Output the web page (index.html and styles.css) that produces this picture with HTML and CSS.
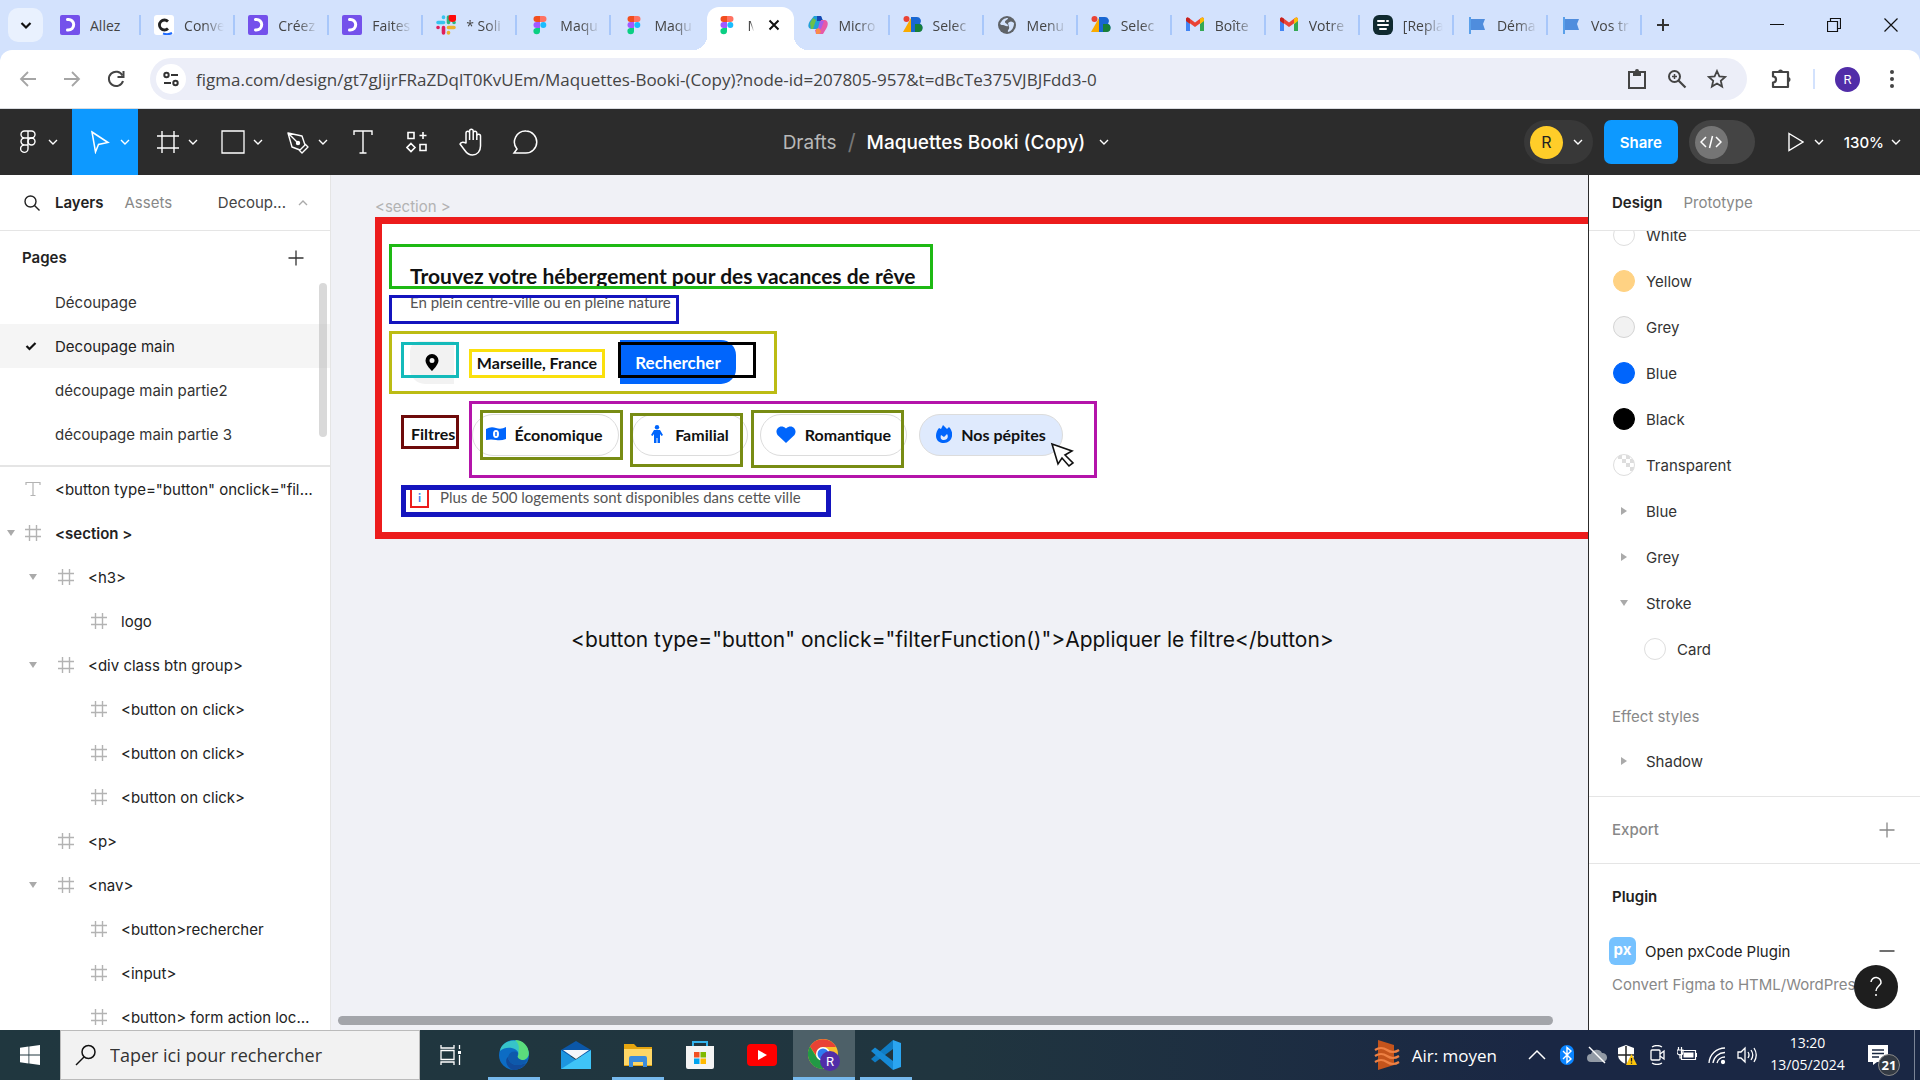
FILE: index.html
```html
<!DOCTYPE html>
<html lang="fr">
<head>
<meta charset="utf-8">
<meta name="viewport" content="width=device-width, initial-scale=1">
<title>Maquettes Booki (Copy) – Figma</title>
<link rel="stylesheet" href="styles.css">
</head>
<body>
<svg class="sprite" aria-hidden="true">
  <symbol id="chev" viewBox="0 0 10 10"><path d="M1 3l4 4 4-4" fill="none" stroke="currentColor" stroke-width="1.4"/></symbol>
  <symbol id="hash" viewBox="0 0 16 16"><path d="M4.500 0v16M11.500 0v16M0 4.500h16M0 11.500h16" fill="none" stroke="currentColor" stroke-width="1.4"/></symbol>
  <symbol id="tri" viewBox="0 0 8 8"><path d="M0 1h8L4 7z" fill="currentColor"/></symbol>
  <symbol id="trir" viewBox="0 0 8 8"><path d="M1 0v8l6-4z" fill="currentColor"/></symbol>
  <symbol id="plus" viewBox="0 0 16 16"><path d="M8 0.500v15M0.500 8h15" fill="none" stroke="currentColor" stroke-width="1.3"/></symbol>
  <symbol id="oc" viewBox="0 0 20 20"><rect width="20" height="20" rx="2" fill="#7451eb"/><path d="M7.500 4.500c8-1 8.500 11 0 10.500" fill="none" stroke="#fff" stroke-width="3" stroke-linecap="round"/></symbol>
  <symbol id="figma" viewBox="0 0 20 20"><path d="M6.500 1H10v6H6.500a3 3 0 010-6z" fill="#f24e1e"/><path d="M10 1h3.500a3 3 0 010 6H10z" fill="#ff7262"/><path d="M10 7v6H6.500a3 3 0 010-6z" fill="#a259ff"/><circle cx="13.300" cy="10" r="3" fill="#1abcfe"/><path d="M6.500 13H10v3.200A3.300 3.100 0 116.500 13z" fill="#0acf83"/></symbol>
  <symbol id="sel" viewBox="0 0 20 20"><circle cx="3.500" cy="4" r="3" fill="#ea4335"/><path d="M0 17L8 3v14z" fill="#f9ab00"/><path d="M8 17V2h6a4 4 0 013 6.500A4.500 4.500 0 0115.500 17z" fill="#1967d2"/><path d="M12 9h3.500a4 4 0 010 8H12z" fill="#188038"/></symbol>
  <symbol id="gmail" viewBox="0 0 20 20"><path d="M1 5v11h4V9z" fill="#4285f4"/><path d="M19 5v11h-4V9z" fill="#34a853"/><path d="M1 5.500V4c0-1.500 2-2 3-1l6 4.500L16 3c1-1 3-.5 3 1v1.500L10 12z" fill="#ea4335"/><path d="M15 4l1-1c1-1 3-.5 3 1v2l-4 3z" fill="#fbbc04"/><path d="M5 4L4 3C3 2 1 2.500 1 4v2l4 3z" fill="#c5221f"/></symbol>
  <symbol id="flag" viewBox="0 0 20 20"><path d="M3 2v17" stroke="#5aa0ea" stroke-width="2"/><path d="M4 4h14l-2 5 2 6H4z" fill="#4f8ddd"/></symbol>
</svg>

<header class="tabstrip">
  <button class="tabsearch" aria-label="Rechercher dans les onglets"><svg width="14" height="14"><path d="M2.500 5L7 9.500 11.500 5" fill="none" stroke="#111" stroke-width="2.200"/></svg></button>
  <nav class="tabs">
    <a href="#" class="tab"><svg><use href="#oc"/></svg><span>Allez</span></a>
    <a href="#" class="tab"><svg viewBox="0 0 20 20"><rect width="20" height="20" rx="3" fill="#fff"/><path d="M14 6.500a5 5 0 100 7" fill="none" stroke="#222" stroke-width="2.800"/><path d="M9 18.500c3 1 6 1 9-.5" stroke="#1f6bff" stroke-width="2" fill="none"/></svg><span>Conve</span></a>
    <a href="#" class="tab"><svg><use href="#oc"/></svg><span>Créez</span></a>
    <a href="#" class="tab"><svg><use href="#oc"/></svg><span>Faites</span></a>
    <a href="#" class="tab"><svg viewBox="0 0 20 20" fill="none" stroke-width="3.600" stroke-linecap="round"><path d="M2 7.500h5.500M7.500 2v.5" stroke="#36c5f0"/><path d="M12.500 7.500V2M18 7.500h.1" stroke="#2eb67d"/><path d="M12.500 12.500H18M12.500 18v-.5" stroke="#ecb22e"/><path d="M7.500 12.500V18M2 12.500h.1" stroke="#e01e5a"/><circle cx="16.500" cy="3" r="4" fill="#ff0a0a" stroke="none"/></svg><span>* Soli</span></a>
    <a href="#" class="tab"><svg><use href="#figma"/></svg><span>Maqu</span></a>
    <a href="#" class="tab last"><svg><use href="#figma"/></svg><span>Maqu</span></a>
    <div class="tab active"><svg><use href="#figma"/></svg><span>M</span><button aria-label="Fermer"><svg viewBox="0 0 12 12"><path d="M1.500 1.500l9 9M10.500 1.500l-9 9" stroke="#111" stroke-width="2"/></svg></button></div>
    <a href="#" class="tab"><svg viewBox="0 0 20 20"><path d="M6 1h7l2 5-5 8H4C-1 14 0 9 2 6z" fill="#21a0d8"/><path d="M9 1h4l2 5H9z" fill="#1748b4"/><path d="M2 8l3-5 3 2-3 9H3z" fill="#6cc04a"/><path d="M13 5h4c4 1 3 6 1 9l-3 5H8l-1-4 4-2z" fill="#e65aa8"/><path d="M8 14l3-1 2 4-2 2H8z" fill="#f98b4a"/><path d="M12 6h4l-3 8-3-1z" fill="#a95be8"/></svg><span>Micro</span></a>
    <a href="#" class="tab"><svg><use href="#sel"/></svg><span>Selec</span></a>
    <a href="#" class="tab"><svg viewBox="0 0 20 20"><circle cx="10" cy="10" r="9" fill="#5f6368"/><path d="M3 9c2-4 4-6 8-6 0 2-3 2-3 4s3 1 3 4c-2 1-3-1-5-1-1 0-2 0-3-1zM11 8c2-2 4-2 6 0 0 4-2 8-6 9-1-2 2-3 1-5z" fill="#d3e3fd"/></svg><span>Menu</span></a>
    <a href="#" class="tab"><svg><use href="#sel"/></svg><span>Selec</span></a>
    <a href="#" class="tab"><svg><use href="#gmail"/></svg><span>Boîte</span></a>
    <a href="#" class="tab"><svg><use href="#gmail"/></svg><span>Votre</span></a>
    <a href="#" class="tab"><svg viewBox="0 0 20 20"><rect width="20" height="20" rx="6" fill="#102a30"/><path d="M5 6h6M14 6h1M5 10h10M7 14h6" stroke="#fff" stroke-width="2" stroke-linecap="round"/></svg><span>[Repla</span></a>
    <a href="#" class="tab"><svg><use href="#flag"/></svg><span>Déma</span></a>
    <a href="#" class="tab"><svg><use href="#flag"/></svg><span>Vos tr</span></a>
  </nav>
  <button class="newtab" aria-label="Nouvel onglet"><svg viewBox="0 0 14 14"><path d="M7 1v12M1 7h12" stroke="#333" stroke-width="2"/></svg></button>
  <div class="winctl">
    <button aria-label="Réduire"><svg viewBox="0 0 14 14"><path d="M0 6.500h14" stroke="#111"/></svg></button>
    <button aria-label="Restaurer"><svg viewBox="0 0 14 14"><path d="M.5 3.500h10v10H.5zM3.500 3V.5h10v10H11" fill="none" stroke="#111" stroke-width="1.200"/></svg></button>
    <button aria-label="Fermer la fenêtre"><svg viewBox="0 0 14 14"><path d="M.5.5l13 13M13.500.5l-13 13" stroke="#111" stroke-width="1.200"/></svg></button>
  </div>
</header>

<div class="toolbar">
  <button class="tb dim" aria-label="Précédent"><svg viewBox="0 0 20 20"><path d="M18 10H3M10 3l-7 7 7 7" fill="none" stroke="currentColor" stroke-width="1.800"/></svg></button>
  <button class="tb dim" aria-label="Suivant"><svg viewBox="0 0 20 20"><path d="M2 10h15M10 3l7 7-7 7" fill="none" stroke="currentColor" stroke-width="1.800"/></svg></button>
  <button class="tb" aria-label="Actualiser"><svg viewBox="0 0 20 20"><path d="M16.500 6.500A7.200 7.200 0 1017 12" fill="none" stroke="currentColor" stroke-width="2"/><path d="M17.500 2v6h-6" fill="none" stroke="currentColor" stroke-width="2"/></svg></button>
  <div class="omnibox">
    <button class="site" aria-label="Informations sur le site"><svg viewBox="0 0 18 18" width="18" height="18" fill="none" stroke="#333" stroke-width="2"><circle cx="4.500" cy="5" r="2.200"/><path d="M9 5h7M2 13h7"/><circle cx="13.500" cy="13" r="2.200"/></svg></button>
    <input class="url" aria-label="Adresse" value="figma.com/design/gt7gJijrFRaZDqlT0KvUEm/Maquettes-Booki-(Copy)?node-id=207805-957&amp;t=dBcTe375VJBJFdd3-0">
    <button class="tb" aria-label="Presse-papiers"><svg viewBox="0 0 20 20"><path d="M2 3h16v16H2z" fill="none" stroke="currentColor" stroke-width="2"/><path d="M6 2h2a2 2 0 014 0h2v5H6z" fill="currentColor"/></svg></button>
    <button class="tb" aria-label="Zoom"><svg viewBox="0 0 20 20" fill="none" stroke="currentColor"><circle cx="7.500" cy="7.500" r="5.500" stroke-width="2"/><path d="M11.500 11.500L18.500 18.500" stroke-width="2.200"/><path d="M7.500 5v5M5 7.500h5" stroke-width="1.500"/></svg></button>
    <button class="tb" aria-label="Favori"><svg viewBox="0 0 20 20"><path d="M10 2l2.400 5.400 5.800.5-4.400 3.900 1.300 5.800L10 14.500l-5.100 3.100 1.300-5.800L1.800 7.900l5.800-.5z" fill="none" stroke="currentColor" stroke-width="1.800"/></svg></button>
  </div>
  <button class="tb ext" aria-label="Extensions"><svg viewBox="0 0 20 20"><path d="M2 3h15v15H2v-4.500a3 3 0 000-6z" fill="none" stroke="currentColor" stroke-width="2.200" stroke-linejoin="round"/><path d="M7 3a2.500 2.500 0 015 0zM17 8a2.500 2.500 0 010 5z" fill="currentColor"/></svg></button>
  <span class="vsep"></span>
  <button class="profile" aria-label="Profil">R</button>
  <button class="tb" aria-label="Menu"><svg viewBox="0 0 20 20" fill="currentColor"><circle cx="10" cy="3" r="2"/><circle cx="10" cy="10" r="2"/><circle cx="10" cy="17" r="2"/></svg></button>
</div>

<div class="figbar">
  <div class="tools">
    <button class="t-logo" aria-label="Menu principal"><svg width="16" height="24" viewBox="0 0 16 24" fill="none" stroke="#fff" stroke-width="1.400"><path d="M8 1H4.500a3.500 3.500 0 000 7H8zM8 1h3.500a3.500 3.500 0 010 7H8zM8 8H4.500a3.500 3.500 0 000 7H8zM8 15H4.500A3.700 3.700 0 108 19z"/><circle cx="11.500" cy="11.500" r="3.500"/></svg><svg class="c"><use href="#chev"/></svg></button>
    <button class="t-move" aria-label="Déplacer"><svg width="20" height="24" viewBox="0 0 20 24"><path d="M2 2l16 10.500-9.500 2L5.500 22z" fill="none" stroke="#fff" stroke-width="1.500"/></svg><svg class="c"><use href="#chev"/></svg></button>
    <button class="t-frame" aria-label="Cadre"><svg width="24" height="24" viewBox="0 0 24 24"><path d="M6 1v22M18 1v22M1 6h22M1 18h22" stroke="#fff" stroke-width="1.400"/></svg><svg class="c"><use href="#chev"/></svg></button>
    <button class="t-frame" aria-label="Forme"><svg width="24" height="24" viewBox="0 0 24 24"><path d="M1 1h22v22H1z" fill="none" stroke="#fff" stroke-width="1.300"/></svg><svg class="c"><use href="#chev"/></svg></button>
    <button class="t-frame" aria-label="Plume"><svg width="24" height="24" viewBox="0 0 24 24" fill="none" stroke="#fff" stroke-width="1.400" stroke-linejoin="round"><path d="M2 3l14 3 3 9-5 5-8-3zM2 3l9 9M19 14l3 3-6 6-3-3"/><circle cx="12" cy="13" r="1.500" fill="#fff"/></svg><svg class="c"><use href="#chev"/></svg></button>
    <button class="t-one t-text" aria-label="Texte"><svg width="20" height="24" viewBox="0 0 20 24"><path d="M1 5V1h18v4M10 1v22M6.500 23h7" fill="none" stroke="#fff" stroke-width="1.400"/></svg></button>
    <button class="t-one" aria-label="Ressources"><svg width="22" height="22" viewBox="0 0 22 22" fill="none" stroke="#fff" stroke-width="1.600"><path d="M2 1.500h6v6H2zM14 13.500h6v6h-6zM5 12.500l4 4-4 4-4-4zM17 1v7M13.500 4.500h7"/></svg></button>
    <button class="t-one" aria-label="Main"><svg width="26" height="28" viewBox="0 0 26 28" fill="none" stroke="#fff" stroke-width="1.500" stroke-linejoin="round"><path d="M8 15V5a1.800 1.800 0 013.600 0v-2a1.800 1.800 0 013.600 0v2a1.800 1.800 0 013.600 0v3a1.800 1.800 0 013.700 0v10c0 5-3 9-8 9-4 0-6-2-8-5l-4.500-6c1-2.500 4-2 6-1zM11.600 5v7M15.200 5v7M18.800 7v5"/></svg></button>
    <button class="t-one" aria-label="Commentaire"><svg width="26" height="26" viewBox="0 0 26 26"><path d="M14 2a11 11 0 11-.5 22H2l3-4A11 11 0 0114 2z" fill="none" stroke="#fff" stroke-width="1.500"/></svg></button>
  </div>
  <div class="doc"><a href="#">Drafts</a><i>/</i><button>Maquettes Booki (Copy)<svg class="c"><use href="#chev"/></svg></button></div>
  <div class="actions">
    <button class="who"><b>R</b><svg class="c"><use href="#chev"/></svg></button>
    <button class="share">Share</button>
    <button class="dev" aria-label="Mode développeur"><b><svg width="22" height="16" viewBox="0 0 22 16" fill="none" stroke="#fff" stroke-width="1.500"><path d="M6 3L1 8l5 5M16 3l5 5-5 5M12.500 2l-3 12"/></svg></b></button>
    <button class="play" aria-label="Présenter"><svg width="16" height="20" viewBox="0 0 16 20"><path d="M1 1.500l14 8.500-14 8.500z" fill="none" stroke="#fff" stroke-width="1.400"/></svg><svg class="c"><use href="#chev"/></svg></button>
    <button class="zoomlvl">130%<svg class="c"><use href="#chev"/></svg></button>
  </div>
</div>

<main class="work">
  <aside class="left">
    <div class="lhead"><svg class="mag" viewBox="0 0 16 16"><circle cx="6.500" cy="6.500" r="5.500" fill="none" stroke="#222" stroke-width="1.400"/><path d="M10.500 10.500l5 5" stroke="#222" stroke-width="1.400"/></svg><button class="on">Layers</button><button>Assets</button><button class="pg">Decoup...<svg class="c up"><use href="#chev"/></svg></button></div>
    <section class="pages">
      <div class="phead"><h2>Pages</h2><button aria-label="Ajouter une page"><svg class="i16"><use href="#plus"/></svg></button></div>
      <ul class="plist">
        <li>Découpage</li>
        <li class="cur"><svg viewBox="0 0 12 10"><path d="M1.500 5l3 3L10.500 2" fill="none" stroke="#111" stroke-width="2.200"/></svg>Decoupage main</li>
        <li>découpage main partie2</li>
        <li>découpage main partie 3</li>
      </ul>
      <span class="vscroll"></span>
    </section>
    <ul class="layers">
      <li><svg class="i16" viewBox="0 0 16 16"><path d="M1 4V1.500h14V4M8 1.500v13M5.500 14.500h5" fill="none" stroke="currentColor" stroke-width="1.200"/></svg><span>&lt;button type="button" onclick="filterFunction()"&gt;</span></li>
      <li class="bold"><svg class="ar"><use href="#tri"/></svg><svg class="i16"><use href="#hash"/></svg><span>&lt;section &gt;</span></li>
      <li class="l1"><svg class="ar"><use href="#tri"/></svg><svg class="i16"><use href="#hash"/></svg><span>&lt;h3&gt;</span></li>
      <li class="l2"><svg class="i16"><use href="#hash"/></svg><span>logo</span></li>
      <li class="l1"><svg class="ar"><use href="#tri"/></svg><svg class="i16"><use href="#hash"/></svg><span>&lt;div class btn group&gt;</span></li>
      <li class="l2"><svg class="i16"><use href="#hash"/></svg><span>&lt;button on click&gt;</span></li>
      <li class="l2"><svg class="i16"><use href="#hash"/></svg><span>&lt;button on click&gt;</span></li>
      <li class="l2"><svg class="i16"><use href="#hash"/></svg><span>&lt;button on click&gt;</span></li>
      <li class="l1"><svg class="i16"><use href="#hash"/></svg><span>&lt;p&gt;</span></li>
      <li class="l1"><svg class="ar"><use href="#tri"/></svg><svg class="i16"><use href="#hash"/></svg><span>&lt;nav&gt;</span></li>
      <li class="l2"><svg class="i16"><use href="#hash"/></svg><span>&lt;button&gt;rechercher</span></li>
      <li class="l2"><svg class="i16"><use href="#hash"/></svg><span>&lt;input&gt;</span></li>
      <li class="l2"><svg class="i16"><use href="#hash"/></svg><span>&lt;button&gt; form action localisation</span></li>
    </ul>
  </aside>

  <section class="canvas">
    <span class="flabel">&lt;section &gt;</span>
    <div class="frame"></div>
    <div class="box n-title"><h3>Trouvez votre hébergement pour des vacances de rêve</h3></div>
    <div class="box n-sub"><p>En plein centre-ville ou en pleine nature</p></div>
    <div class="pinbg"><svg width="14" height="18" viewBox="0 0 14 18"><path fill-rule="evenodd" d="M7 0a6.500 6.500 0 016.500 6.500C13.500 11 7 17 7 17S.5 11 .5 6.500A6.500 6.500 0 017 0zm0 4a2.500 2.500 0 100 5 2.500 2.500 0 000-5z"/></svg></div>
    <button class="search">Rechercher</button>
    <div class="box n-form"></div>
    <div class="box n-pin"></div>
    <div class="box n-city">Marseille, France</div>
    <div class="box n-btn"></div>
    <div class="box n-filt">Filtres</div>
    <div class="box n-group"></div>
    <button class="pill p1"><svg width="20" height="14" viewBox="0 0 20 14"><path d="M0 2q5-3 10-1t10-1v12q-5 2-10 1T0 13z" fill="#0065fc"/><ellipse cx="10" cy="7" rx="3" ry="4" fill="#fff"/><path d="M10 5v4" stroke="#0065fc" stroke-width="1.500"/></svg>Économique</button>
    <button class="pill p2"><svg width="12" height="18" viewBox="0 0 12 18" fill="#0065fc"><circle cx="6" cy="2.200" r="2.200"/><path d="M3 5h6l3 5-1.500 1L9 9v9H6.500v-5h-1v5H3V9l-1.500 2L0 10z"/></svg>Familial</button>
    <button class="pill p3"><svg width="20" height="17" viewBox="0 0 20 17"><path d="M10 17L1.500 9C-2 4 4-3 10 2.500 16-3 22 4 18.500 9z" fill="#0065fc"/></svg>Romantique</button>
    <button class="pill p4"><svg width="16" height="18" viewBox="0 0 16 18"><path d="M7 0l4 4 2-2c6 6 3 16-5 16C-1 18-2 9 3 3l2 1z" fill="#0065fc"/><path d="M5 10l3 2 3-3c2 3 0 6-3 6s-4-2-3-5z" fill="#dfeafd"/></svg>Nos pépites</button>
    <div class="box n-o1"></div><div class="box n-o2"></div><div class="box n-o3"></div>
    <svg class="cursor" width="26" height="28" viewBox="0 0 26 28"><path d="M2 2l20 7-7 4 8 8-4 3-7-8-4 6z" fill="#fff" stroke="#111" stroke-width="1.600"/></svg>
    <div class="box n-info"><b>i</b><p>Plus de 500 logements sont disponibles dans cette ville</p></div>
    <p class="note">&lt;button type="button" onclick="filterFunction()"&gt;Appliquer le filtre&lt;/button&gt;</p>
    <span class="hscroll"></span>
  </section>

  <aside class="right">
    <div class="rhead"><button class="on">Design</button><button>Prototype</button></div>
    <div class="rbody">
      <ul class="styles">
        <li><i class="sw"></i>White</li>
        <li><i class="sw yellow"></i>Yellow</li>
        <li><i class="sw grey"></i>Grey</li>
        <li><i class="sw blue"></i>Blue</li>
        <li><i class="sw black"></i>Black</li>
        <li><i class="sw transp"></i>Transparent</li>
        <li><svg class="ar"><use href="#trir"/></svg>Blue</li>
        <li><svg class="ar"><use href="#trir"/></svg>Grey</li>
        <li><svg class="ar"><use href="#tri"/></svg>Stroke</li>
        <li class="sub"><i class="sw"></i>Card</li>
      </ul>
      <h3 class="muted eff">Effect styles</h3>
      <ul class="styles shadow"><li><svg class="ar"><use href="#trir"/></svg>Shadow</li></ul>
      <div class="export"><h3>Export</h3><button aria-label="Ajouter un export"><svg class="i16"><use href="#plus"/></svg></button></div>
      <div class="plugin">
        <h3>Plugin</h3>
        <div class="prow"><b class="px">px</b><span>Open pxCode Plugin</span><button aria-label="Retirer"><svg class="i16" viewBox="0 0 16 16"><path d="M.5 8h15" stroke="#222" stroke-width="1.300"/></svg></button></div>
        <p>Convert Figma to HTML/WordPress</p>
      </div>
    </div>
    <button class="help" aria-label="Aide"><svg width="16" height="22" viewBox="0 0 16 22"><path d="M3 6a5 5 0 1110 1c-1 3-5 4-5 8M8 18v2" fill="none" stroke="#fff" stroke-width="1.500"/></svg></button>
  </aside>
</main>

<footer class="taskbar">
  <button class="start" aria-label="Démarrer"><svg width="20" height="20" viewBox="0 0 20 20" fill="#fff"><path d="M0 2.800L8.500 1.600v7.900H0zM9.300 1.500L20 0v9.500H9.300zM0 10.400h8.500v8L0 17.200zM9.300 10.400H20V20L9.300 18.500z"/></svg></button>
  <label class="tsearch"><svg width="22" height="22" viewBox="0 0 22 22" fill="none" stroke="#111" stroke-width="1.500"><circle cx="13.500" cy="8" r="6.500"/><path d="M9 13L1 21"/></svg><input placeholder="Taper ici pour rechercher" aria-label="Rechercher"></label>
  <div class="apps">
    <button aria-label="Vue des tâches"><svg width="22" height="20" viewBox="0 0 22 20" fill="none" stroke="#fff" stroke-width="1.300"><path d="M1 0v3h13V0M1 5.500h13v9H1zM1 20v-3h13v3M19.500 0v4M19.500 10v10"/><path d="M18 6h3v3h-3z" fill="#fff" stroke="none"/></svg></button>
    <button class="run" aria-label="Edge"><svg width="30" height="30" viewBox="0 0 30 30"><circle cx="15" cy="15" r="15" fill="#0c6cc4"/><path d="M1 11C3-2 25-4 29.500 12c1 7-5 9-10 7-3-1 0-3 0-5 0-6-12-9-18.500-3z" fill="#37c3c8"/><path d="M16 0c9 0 15 8 13.500 15-1 5-7 6-10 4-3-1 0-3 0-5 0-5 2-9-3.500-14z" fill="#5bdc7c"/><path d="M9 17c1 8 9 10 18 6-4 6-9 7-13 7-6-2-9-10-5-13z" fill="#114a9a"/><path d="M19 13c-5-4-10 1-10 5 2 7 10 9 17 5l3-3c-4 1-13 0-10-7z" fill="#0e59ab"/></svg></button>
    <button aria-label="Courrier"><svg width="30" height="28" viewBox="0 0 30 28"><path d="M0 9L15 0l15 9v6H0z" fill="#0b57a8"/><path d="M0 9l15 10v9H0z" fill="#1d95df"/><path d="M30 9v19H0z" fill="#3fc4f7"/><path d="M2 9h26L15 18z" fill="#f3f6fa"/></svg></button>
    <button class="run" aria-label="Explorateur"><svg width="30" height="24" viewBox="0 0 30 24"><path d="M1 1h10l3 3h15v19H1z" fill="#e6a50f"/><path d="M1 6h28v16H1z" fill="#ffd766"/><path d="M6 24v-9q0-2 2-2h14q2 0 2 2v9h-4v-5H10v5z" fill="#3c8cdc"/></svg></button>
    <button aria-label="Store"><svg width="30" height="30" viewBox="0 0 30 30"><path d="M8 7V2h14v5" fill="none" stroke="#34b4ee" stroke-width="2"/><path d="M1 6h28v21q0 2-2 2H3q-2 0-2-2z" fill="#f4f4f4"/><path d="M9 12h5.500v5.500H9z" fill="#f25022"/><path d="M15.500 12H21v5.500h-5.500z" fill="#7fba00"/><path d="M9 18.500h5.500V24H9z" fill="#00a4ef"/><path d="M15.500 18.500H21V24h-5.500z" fill="#ffb900"/></svg></button>
    <button aria-label="YouTube"><svg width="30" height="22" viewBox="0 0 30 22"><rect width="30" height="22" rx="4" fill="#f00"/><path d="M11 6l9 5-9 5z" fill="#fff"/></svg></button>
    <button class="run focus" aria-label="Chrome"><svg width="32" height="32" viewBox="0 0 32 32"><circle cx="15" cy="15" r="15" fill="#fbc02d"/><path d="M2 7.500A15 15 0 0128 8H15a7 7 0 00-6.500 9z" fill="#e94235"/><path d="M2 7.500A15 15 0 0015 30l6-11c-4 4-10 3-12.500-1z" fill="#229a45"/><circle cx="15" cy="15" r="7" fill="#fff"/><circle cx="15" cy="15" r="5.500" fill="#2f7bf0"/><circle cx="22" cy="22" r="10" fill="#512da8"/><text x="22" y="27" text-anchor="middle" font-family="Roboto, sans-serif" font-size="13" fill="#fff">R</text></svg></button>
    <button class="run" aria-label="VS Code"><svg width="30" height="30" viewBox="0 0 30 30"><path d="M22 0v9L4 22.500 0 19z" fill="#0f7cc4"/><path d="M0 11l4-3.500L22 21v9z" fill="#168ad6"/><path d="M22 0l8 3v24l-8 3z" fill="#2ba5f0"/></svg></button>
  </div>
  <div class="tray">
    <button class="air"><svg width="26" height="30" viewBox="0 0 26 30"><path d="M4 0l16 5v20L4 30z" fill="#c4541c"/><path d="M1 10q6-4 12 0t12 0M1 16q6-4 12 0t12 0M1 22q6-4 12 0t12 0" fill="none" stroke="#ee8144" stroke-width="2.200"/></svg>Air: moyen</button>
    <div class="ticons">
      <svg viewBox="0 0 20 20" fill="none" stroke="#fff" stroke-width="1.500"><path d="M2 14l8-8 8 8"/></svg>
      <svg viewBox="0 0 20 20"><rect x="3" y="0" width="14" height="20" rx="7" fill="#0a84ff"/><path d="M6 6l8 8-4 3.500v-15L14 6l-8 8" fill="none" stroke="#fff" stroke-width="1.400"/></svg>
      <svg viewBox="0 0 20 20"><path d="M4 17a4 4 0 010-8 6 6 0 0111-1 4.500 4.500 0 011 9z" fill="#929aa5"/><path d="M2 2l16 16" stroke="#fff" stroke-width="1.500"/></svg>
      <svg viewBox="0 0 20 20"><path d="M9 0l8 3v7c0 5-5 8-8 9-3-1-8-4-8-9V3z" fill="#fff"/><path d="M9 1v18M1 10h16" stroke="#222" stroke-width="1.500"/><path d="M14.500 9L20 20H9z" fill="#fdc50c"/><path d="M14.500 13v3.500M14.500 17.500v1.200" stroke="#222" stroke-width="1.300"/></svg>
      <svg viewBox="0 0 20 20" fill="none" stroke="#fff" stroke-width="1.300"><rect x="4" y="5" width="9" height="10" rx="1"/><path d="M13 9l4-3v8l-4-3M5 2q5-3 10 0M5 18q5 3 10 0"/></svg>
      <svg viewBox="0 0 20 20"><path d="M4.500 5.500h14v9h-14z" fill="none" stroke="#fff" stroke-width="1.200"/><path d="M6.500 7.500h10v5h-10z" fill="#fff"/><path d="M19.500 8v4M1.500 2v3M4.500 2v3M0 5h6v2a3 3 0 01-6 0zM3 9v4h2" stroke="#fff" fill="none" stroke-width="1.200"/></svg>
      <svg viewBox="0 0 20 20" fill="none" stroke="#fff" stroke-width="1.300"><path d="M2 18A16 16 0 0118 3M6 18A12 12 0 0118 7.500M10 18a8 8 0 018-6"/><circle cx="16" cy="17" r="1.500" fill="#fff"/></svg>
      <svg viewBox="0 0 20 20" fill="none" stroke="#fff" stroke-width="1.300"><path d="M1 7h3l4-4v14l-4-4H1zM11 7q2 3 0 6M14 5q3.500 5 0 10M17 3q4.500 7 0 14"/></svg>
    </div>
    <div class="clock"><span>13:20</span><span>13/05/2024</span></div>
    <button class="notif" aria-label="Notifications"><svg width="20" height="20" viewBox="0 0 20 20"><path d="M0 0h20v17H9l-4 3v-3H0z" fill="#fff"/><path d="M4 5h12M4 8.500h12M4 12h7" stroke="#1b2942" stroke-width="1.300"/></svg><b>21</b></button>
  </div>
</footer>
</body>
</html>
```
FILE: styles.css
```css
* { box-sizing: border-box; }
body { margin: 0; height: 100vh; display: flex; flex-direction: column; overflow: hidden; font-family: Inter, sans-serif; font-size: 15px; color: #333; background: #fff; }
button, input { font: inherit; color: inherit; background: none; border: 0; padding: 0; margin: 0; }
button { display: flex; align-items: center; justify-content: center; white-space: nowrap; }
a { color: inherit; text-decoration: none; }
ul { list-style: none; margin: 0; padding: 0; }
h2, h3, p { margin: 0; font-size: inherit; font-weight: inherit; }
svg { flex: none; display: block; }
.sprite { position: absolute; width: 0; height: 0; }
.c { width: 10px; height: 10px; }
.i16 { width: 16px; height: 16px; }
.ar { width: 8px; height: 8px; color: #aaa; }

/* browser tabs */
.tabstrip { flex: none; height: 50px; display: flex; align-items: center; background: #d3e2fd; padding-left: 8px; font: 14px "Open Sans", sans-serif; }
.tabsearch { width: 35px; height: 34px; border-radius: 10px; background: #e9f1fe; margin-right: 4px; }
.tabs { flex: 1; min-width: 0; height: 50px; display: flex; }
.tab { position: relative; flex: 1 1 0; min-width: 0; display: flex; align-items: center; gap: 10px; padding-left: 13px; color: #444; }
.tab > svg { width: 20px; height: 20px; }
.tab > span { width: 40px; overflow: hidden; white-space: nowrap; -webkit-mask-image: linear-gradient(90deg, #000 50%, transparent); mask-image: linear-gradient(90deg, #000 50%, transparent); }
.tab:first-child > span { -webkit-mask-image: none; mask-image: none; }
.tab::after { content: ""; position: absolute; right: 0; top: 15px; width: 2px; height: 20px; background: #a8c7fa; }
.tab.last::after { display: none; }
.tab.active { flex: 0 0 87px; margin: 7px 1px 0 2px; padding: 0 0 7px 10px; background: #fff; border-radius: 12px 12px 0 0; }
.tab.active > span { width: 7px; }
.tab.active button { margin-left: 4px; }
.tab.active button svg { width: 12px; height: 12px; }
.tab.active::before, .tab.active::after { content: ""; position: absolute; top: auto; bottom: 0; width: 14px; height: 14px; background: radial-gradient(circle at 0 0, transparent 14px, #fff 14px); }
.tab.active::before { left: -14px; }
.tab.active::after { right: -14px; background: radial-gradient(circle at 100% 0, transparent 14px, #fff 14px); }
.newtab { width: 42px; }
.newtab svg, .winctl svg { width: 14px; height: 14px; }
.winctl { display: flex; width: 236px; padding: 0 1px 0 65px; }
.winctl button { flex: 1; }

/* address bar */
.toolbar { flex: none; height: 59px; display: flex; align-items: center; padding: 0 6px; background: #fff; border-bottom: 1px solid #dadce0; border-radius: 12px 12px 0 0; box-shadow: 0 -12px 0 #d3e2fd; clip-path: inset(0); color: #444; }
.tb { width: 44px; height: 32px; flex: none; }
.tb svg { width: 20px; height: 20px; }
.tb.dim { color: #a5a5a5; }
.omnibox { flex: 1; min-width: 0; margin-left: 12px; height: 42px; display: flex; align-items: center; background: #eceef8; border-radius: 21px; padding: 0 10px 0 6px; }
.omnibox .tb { width: 40px; }
.site { flex: none; width: 30px; height: 30px; border-radius: 50%; background: #fff; }
.url { flex: 1; min-width: 0; margin-left: 10px; font: 17px "Open Sans", sans-serif; color: #444; }
.ext { margin-left: 12px; }
.vsep { width: 2px; height: 20px; background: #d3e2fd; margin: 0 20px 0 10px; }
.profile { width: 25px; height: 25px; border-radius: 50%; background: #512da8; color: #fff; font: 13px Roboto, sans-serif; margin-right: 10px; }

/* editor toolbar */
.figbar { flex: none; height: 66px; display: grid; grid-template-columns: 1fr auto 1fr; align-items: center; background: #2c2c2c; color: #fff; }
.tools, .actions, .doc { display: flex; align-items: center; }
.tools button { height: 66px; }
.t-logo { width: 72px; gap: 12px; padding-left: 5px; }
.t-move { width: 66px; gap: 10px; padding-left: 10px; background: #0d99ff; }
.t-frame { width: 65px; gap: 8px; padding-left: 12px; }
.t-one { width: 54px; }
.t-text { margin-left: 3px; }
.doc { font-size: 19px; gap: 11px; margin-right: 28px; }
.doc a { color: #b8b8b8; }
.doc i { font-style: normal; font-size: 22px; color: #777; }
.doc button { gap: 14px; font-weight: 500; }
.actions { justify-content: flex-end; padding-right: 19px; }
.who { width: 69px; height: 44px; border-radius: 22px; background: #383838; gap: 10px; padding-right: 4px; }
.who b { width: 33px; height: 33px; border-radius: 50%; background: #ffcd29; color: #222; font-weight: 400; font-size: 16px; line-height: 33px; }
.share { width: 74px; height: 44px; border-radius: 7px; background: #0d99ff; font-weight: 600; font-size: 15px; margin: 0 11px; }
.dev { width: 66px; height: 44px; border-radius: 22px; background: #444; justify-content: flex-start; padding-left: 6px; }
.dev b { width: 33px; height: 33px; border-radius: 50%; background: #757575; display: grid; place-items: center; }
.play { gap: 10px; margin-left: 33px; }
.zoomlvl { gap: 7px; margin-left: 20px; font-size: 15px; font-weight: 500; }

/* three-column work area */
.work { flex: 1; min-height: 0; display: flex; }
.left { flex: none; width: 331px; border-right: 1px solid #e5e5e5; display: flex; flex-direction: column; overflow: hidden; }
.lhead { flex: none; height: 56px; display: flex; align-items: center; border-bottom: 1px solid #e5e5e5; padding-left: 24px; color: #888; }
.mag { width: 16px; height: 16px; margin-right: 15px; }
.lhead .on, .rhead .on { color: #222; font-weight: 600; margin-right: 21px; }
.pg { margin: 0 22px 0 auto; gap: 12px; color: #444; }
.up { transform: rotate(180deg); color: #aaa; }
.pages { flex: none; position: relative; height: 236px; border-bottom: 2px solid #e5e5e5; }
.phead { height: 49px; display: flex; align-items: center; justify-content: space-between; padding: 4px 26px 0 22px; }
.phead h2 { font-weight: 600; color: #222; }
.plist li { display: flex; align-items: center; height: 44px; padding-left: 55px; }
.plist .cur { background: #f5f5f5; padding-left: 25px; gap: 18px; color: #222; }
.plist svg { width: 12px; height: 10px; }
.vscroll { position: absolute; right: 3px; top: 52px; width: 8px; height: 154px; border-radius: 4px; background: rgba(179, 179, 179, .5); }
.layers li { display: flex; align-items: center; height: 44px; padding: 0 13px 0 25px; color: #222; }
.layers .i16 { color: #b3b3b3; margin-right: 14px; }
.layers span { overflow: hidden; text-overflow: ellipsis; white-space: nowrap; }
.layers .ar { margin: 0 10px 0 -18px; }
.layers .bold { font-weight: 600; }
.layers .l1 { padding-left: 58px; }
.layers .l1 .ar { margin: 0 21px 0 -29px; }
.layers .l2 { padding-left: 91px; }

/* design canvas: nodes sit at free coordinates */
.canvas { position: relative; flex: 1; min-width: 0; overflow: hidden; background: #f0f1f6; }
.canvas > * { position: absolute; }
.flabel { left: 44px; top: 22px; color: #b3b3b3; }
.frame { left: 44px; right: -20px; top: 42px; height: 322px; background: #fff; border: 7px solid #ec1c1c; }
.box, .pill, .search { font-family: Lato, sans-serif; white-space: nowrap; }
.box { border: 3px solid; overflow: hidden; }
.box h3, .box p { color: #111; }
.n-title { left: 58px; top: 69px; width: 544px; height: 45px; border-color: #1eb914; }
.n-title h3 { font-size: 21px; font-weight: 700; line-height: 24px; margin: 17px 0 0 18px; }
.n-sub { left: 58px; top: 120px; width: 290px; height: 29px; border-color: #1414be; }
.n-sub p { font-size: 15px; line-height: 18px; margin: -5px 0 0 18px; color: #555; }
.n-form { left: 58px; top: 156px; width: 388px; height: 63px; border-color: #bcbc14; }
.pinbg { left: 79px; top: 166px; width: 44px; height: 43px; border-radius: 10px 0 0 15px; background: #f2f2f2; display: grid; place-items: center; }
.n-pin { left: 70px; top: 167px; width: 58px; height: 36px; border-color: #14baba; }
.n-city { left: 138px; top: 174px; width: 136px; height: 29px; border-color: #fae00c; font-size: 16px; font-weight: 700; line-height: 21px; text-align: center; color: #111; }
.search { left: 289px; top: 165px; width: 116px; height: 44px; border-radius: 0 15px 15px 0; background: #0065fc; color: #fff; font-size: 17px; font-weight: 700; }
.n-btn { left: 287px; top: 167px; width: 138px; height: 36px; border-color: #000; }
.n-filt { left: 70px; top: 240px; width: 58px; height: 34px; border-color: #6e0a0a; font-size: 16px; font-weight: 700; line-height: 32px; padding-left: 7px; color: #111; }
.n-group { left: 138px; top: 226px; width: 628px; height: 77px; border-color: #b414aa; }
.pill { top: 239px; height: 42px; border: 1px solid #dcdcdc; border-radius: 21px; font-size: 16px; font-weight: 700; color: #111; gap: 9px; padding-bottom: 2px; }
.p1 { left: 141px; width: 147px; padding-right: 3px; }
.p2 { left: 301px; width: 116px; gap: 12px; }
.p3 { left: 429px; width: 147px; }
.p4 { left: 588px; width: 144px; background: #dfeafd; }
.n-o1, .n-o2, .n-o3 { border-color: #788c14; }
.n-o1 { left: 149px; top: 235px; width: 143px; height: 50px; }
.n-o2 { left: 299px; top: 238px; width: 113px; height: 54px; }
.n-o3 { left: 420px; top: 235px; width: 153px; height: 58px; }
.cursor { left: 719px; top: 267px; }
.n-info { left: 70px; top: 310px; width: 430px; height: 32px; border-width: 5px; border-color: #1414be; display: flex; align-items: flex-start; gap: 11px; padding-left: 4px; }
.n-info b { flex: none; width: 19px; height: 18px; border: 2px solid #ec1c1c; border-top: 0; color: #3c82f0; font-size: 12px; line-height: 15px; text-align: center; }
.n-info p { font-size: 15px; line-height: 15px; color: #555; }
.note { left: 240px; top: 450px; font-size: 21px; line-height: 30px; color: #111; white-space: nowrap; }
.hscroll { left: 7px; right: 35px; bottom: 5px; height: 9px; border-radius: 5px; background: #a3a5aa; }

/* design panel */
.right { position: relative; flex: none; width: 332px; background: #fff; border-left: 1px solid #2c2c2c; display: flex; flex-direction: column; }
.rhead { flex: none; height: 56px; display: flex; align-items: center; padding-left: 23px; border-bottom: 1px solid #e5e5e5; color: #888; }
.rbody { flex: 1; min-height: 0; overflow: hidden; }
.styles { margin-top: -19px; }
.styles li { display: flex; align-items: center; height: 46px; padding-left: 24px; gap: 11px; }
.styles .sub { padding-left: 55px; }
.styles .ar { margin: 0 7px; }
.sw { width: 22px; height: 22px; border-radius: 50%; border: 1px solid #dedede; background: #fff; }
.yellow { background: #ffd283; border-color: #ffd283; }
.grey { background: #f2f2f2; border-color: #d4d4d4; }
.blue { background: #0065fc; border-color: #0065fc; }
.black { background: #000; border-color: #000; }
.transp { background: linear-gradient(45deg, #fff 50%, transparent 50%), repeating-conic-gradient(#ddd 0 25%, #fff 0 50%) 0 0 / 8px 8px; }
.muted { color: #888; }
.eff { height: 66px; padding: 33px 0 0 23px; line-height: 24px; }
.styles.shadow { margin: 0; padding-bottom: 12px; }
.export { height: 68px; border: 1px solid #e5e5e5; border-width: 1px 0; display: flex; align-items: center; justify-content: space-between; padding: 0 25px 1px 23px; color: #888; font-weight: 500; }
.plugin { padding: 21px 25px 0 23px; }
.plugin h3 { line-height: 24px; font-weight: 600; color: #222; }
.prow { display: flex; align-items: center; margin: 28px 0 8px -3px; height: 28px; color: #222; }
.prow button { margin-left: auto; }
.px { width: 27px; height: 28px; border-radius: 6px; background: #76c2ff; color: #fff; line-height: 26px; text-align: center; margin-right: 9px; }
.plugin p { line-height: 24px; color: #888; white-space: nowrap; }
.help { position: absolute; right: 22px; bottom: 21px; width: 44px; height: 44px; border-radius: 50%; background: #1e1e1e; }

/* system taskbar */
.taskbar { flex: none; height: 50px; display: flex; background: linear-gradient(90deg, #20373f, #20353f 50%, #1a2744 80%, #1a2744); color: #fff; font: 16px "Open Sans", sans-serif; }
.start { width: 60px; }
.tsearch { width: 360px; display: flex; align-items: center; gap: 13px; padding-left: 14px; background: #f2f2f2; border: 1px solid #bbb; }
.tsearch input { flex: 1; min-width: 0; font-size: 18px; }
.tsearch input::placeholder { color: #333; opacity: 1; }
.apps { display: flex; }
.apps button { position: relative; width: 62px; height: 50px; }
.apps button:first-child { width: 61px; margin-right: 2px; }
.run::after { content: ""; position: absolute; left: 5px; right: 5px; bottom: 0; height: 3px; background: #76b9ed; }
.focus { background: #4d6068; }
.focus::after { left: 0; right: 0; }
.tray { margin-left: auto; display: flex; align-items: center; padding-right: 5px; }
.air { gap: 12px; font-size: 17px; margin-right: 30px; }
.ticons { display: flex; gap: 10px; }
.ticons svg { width: 20px; height: 20px; }
.clock { display: flex; flex-direction: column; align-items: center; line-height: 22px; font-size: 14px; width: 101px; padding-bottom: 2px; }
.notif { position: relative; width: 57px; height: 50px; border-right: 1px solid #7b8496; padding-right: 16px; }
.notif b { position: absolute; right: 14px; bottom: 4px; width: 22px; height: 22px; border-radius: 50%; border: 1px solid #888; background: #333a44; font: 700 13px/20px "Open Sans", sans-serif; }
```
